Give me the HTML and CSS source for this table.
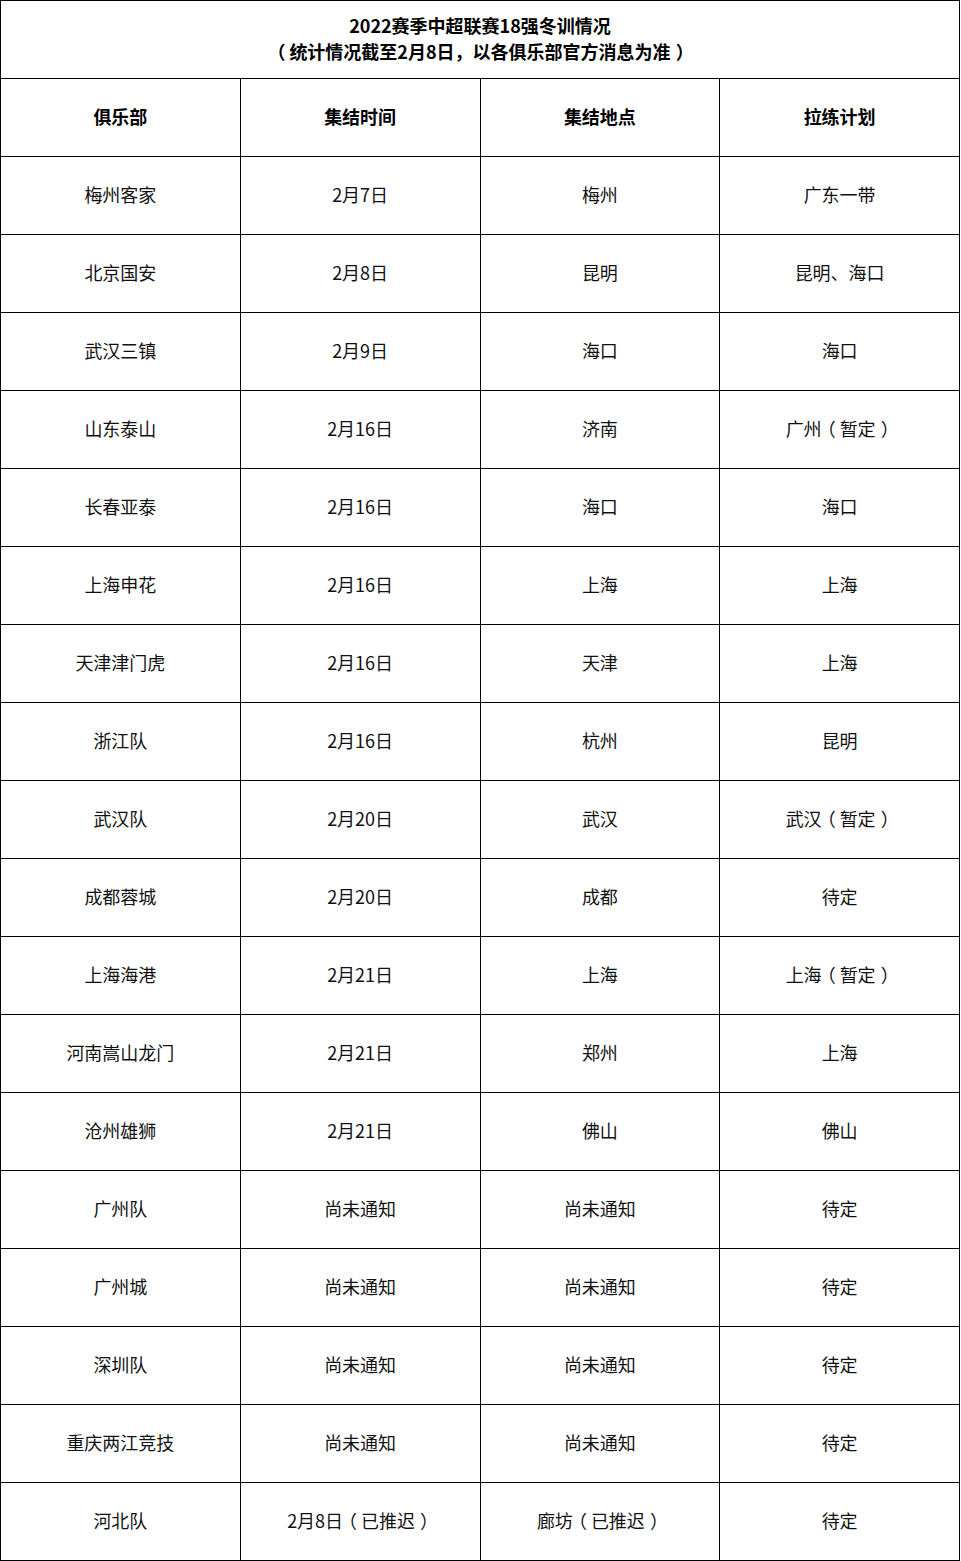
FILE: index.html
```html
<!DOCTYPE html>
<html lang="zh">
<head>
<meta charset="utf-8">
<title>2022赛季中超联赛18强冬训情况</title>
<link rel="stylesheet" href="styles.css">
</head>
<body>
<table class="schedule">
  <thead>
    <tr class="title-row">
      <th colspan="4">2022赛季中超联赛18强冬训情况<br><span class="br">（</span>统计情况截至2月8日，以各俱乐部官方消息为准<span class="br">）</span></th>
    </tr>
    <tr class="head-row">
      <th>俱乐部</th><th>集结时间</th><th>集结地点</th><th>拉练计划</th>
    </tr>
  </thead>
  <tbody>
    <tr><td>梅州客家</td><td>2月7日</td><td>梅州</td><td>广东一带</td></tr>
    <tr><td>北京国安</td><td>2月8日</td><td>昆明</td><td>昆明、海口</td></tr>
    <tr><td>武汉三镇</td><td>2月9日</td><td>海口</td><td>海口</td></tr>
    <tr><td>山东泰山</td><td>2月16日</td><td>济南</td><td>广州<span class="br">（</span>暂定<span class="br">）</span></td></tr>
    <tr><td>长春亚泰</td><td>2月16日</td><td>海口</td><td>海口</td></tr>
    <tr><td>上海申花</td><td>2月16日</td><td>上海</td><td>上海</td></tr>
    <tr><td>天津津门虎</td><td>2月16日</td><td>天津</td><td>上海</td></tr>
    <tr><td>浙江队</td><td>2月16日</td><td>杭州</td><td>昆明</td></tr>
    <tr><td>武汉队</td><td>2月20日</td><td>武汉</td><td>武汉<span class="br">（</span>暂定<span class="br">）</span></td></tr>
    <tr><td>成都蓉城</td><td>2月20日</td><td>成都</td><td>待定</td></tr>
    <tr><td>上海海港</td><td>2月21日</td><td>上海</td><td>上海<span class="br">（</span>暂定<span class="br">）</span></td></tr>
    <tr><td>河南嵩山龙门</td><td>2月21日</td><td>郑州</td><td>上海</td></tr>
    <tr><td>沧州雄狮</td><td>2月21日</td><td>佛山</td><td>佛山</td></tr>
    <tr><td>广州队</td><td>尚未通知</td><td>尚未通知</td><td>待定</td></tr>
    <tr><td>广州城</td><td>尚未通知</td><td>尚未通知</td><td>待定</td></tr>
    <tr><td>深圳队</td><td>尚未通知</td><td>尚未通知</td><td>待定</td></tr>
    <tr><td>重庆两江竞技</td><td>尚未通知</td><td>尚未通知</td><td>待定</td></tr>
    <tr><td>河北队</td><td>2月8日<span class="br">（</span>已推迟<span class="br">）</span></td><td>廊坊<span class="br">（</span>已推迟<span class="br">）</span></td><td>待定</td></tr>
  </tbody>
</table>
</body>
</html>
```

FILE: styles.css
```css
html, body {
  margin: 0;
  padding: 0;
  background: #ffffff;
}

body {
  font-family: "Noto Sans CJK SC", "Noto Sans", "Liberation Sans", sans-serif;
  color: #111111;
}

.schedule {
  border-collapse: collapse;
  width: 960px;
  table-layout: fixed;
  font-size: 18px;
  line-height: 26px;
}

.schedule th,
.schedule td {
  border: 1px solid #000000;
  text-align: center;
  vertical-align: middle;
  padding: 0 0 4px 0;
  width: 240px;
}

.schedule tr {
  height: 78px;
}

.schedule th {
  font-weight: bold;
  color: #000000;
}

.title-row th {
  width: auto;
}

/* full-width brackets: half-width glyph, centred in a full em box */
.br {
  font-feature-settings: "halt" 1;
  padding: 0 4px 0 5px;
}
```
